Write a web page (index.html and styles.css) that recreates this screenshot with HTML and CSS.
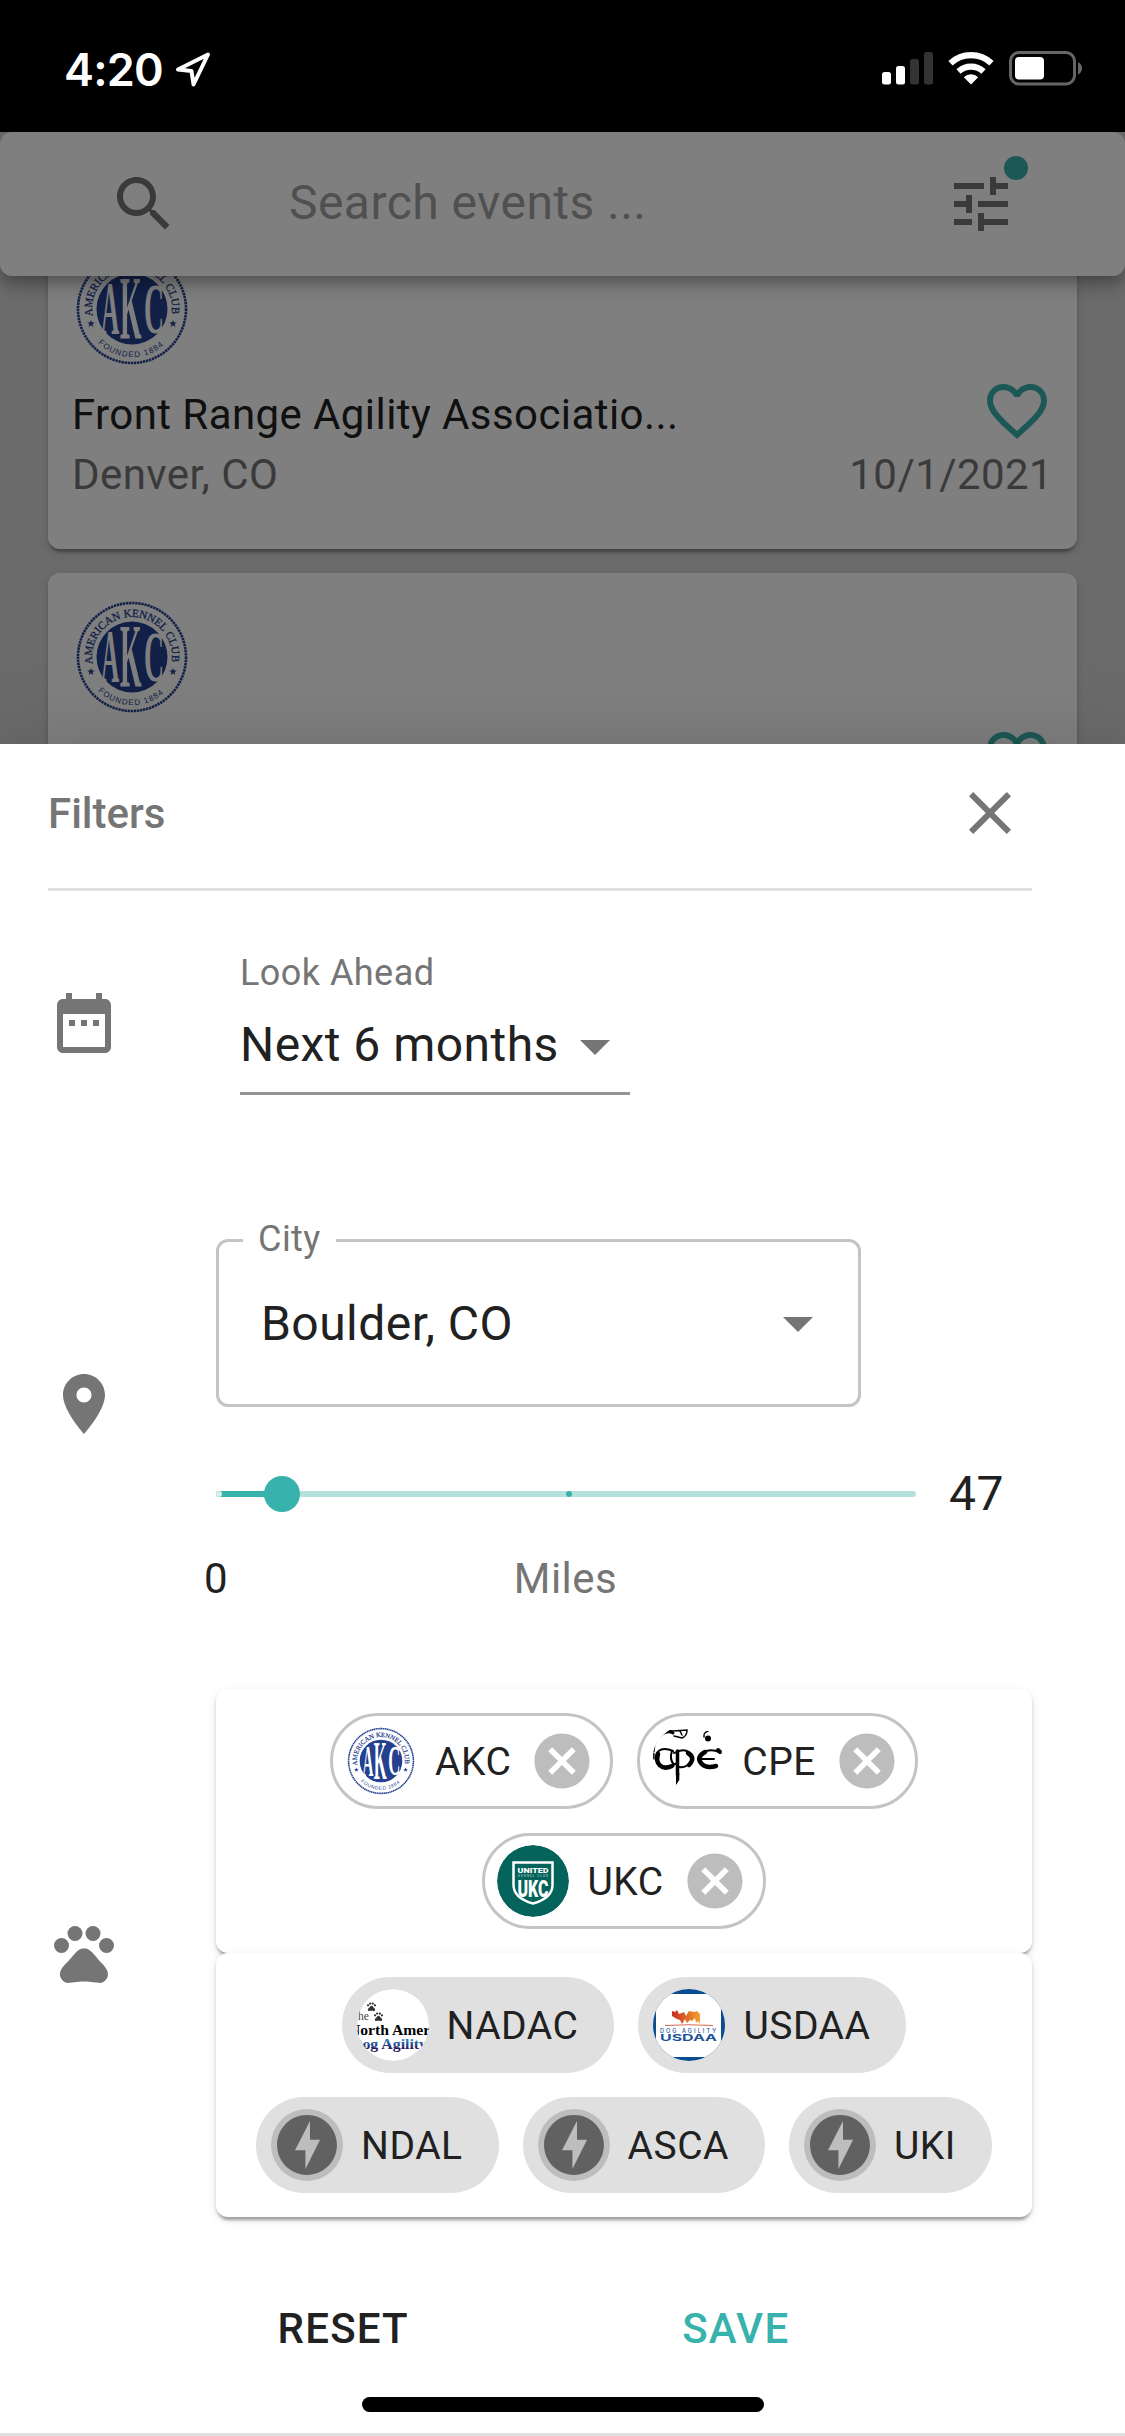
FILE: index.html
```html
<!DOCTYPE html>
<html lang="en">
<head>
    <meta charset="UTF-8">
    <title>Events</title>
    <link rel="stylesheet" href="styles.css">
</head>
<body>

    <!-- shared logo, used in the cards and in the chip -->
    <svg class="defs" width="0" height="0">
        <defs>
            <path id="arcTop" d="M20.600 66.900A40 40 0 1 1 99.400 66.900"/>
            <path id="arcBottom" d="M26 94A48 48 0 0 0 94 94"/>
            <symbol id="akc" viewBox="0 0 120 120">
                <circle cx="60" cy="60" r="54" fill="none" stroke="#24408e" stroke-width="2.600" stroke-dasharray="2.400 0.700"/>
                <circle cx="60" cy="60" r="35.500" fill="#24408e"/>
                <text class="akc-ring" font-size="11"><textPath href="#arcTop">AMERICAN KENNEL CLUB</textPath></text>
                <text class="akc-founded" font-size="8"><textPath href="#arcBottom">FOUNDED 1884</textPath></text>
                <path fill="#24408e" d="M19 71l1 2.500h2.800l-2.200 1.700.8 2.700-2.400-1.600-2.400 1.600.8-2.700-2.200-1.700H18zM101 71l1 2.500h2.800l-2.200 1.700.8 2.700-2.400-1.600-2.400 1.600.8-2.700-2.200-1.700h2.800z"/>
                <g class="akc-letters">
                    <text transform="translate(29 85) scale(.60 1.800)" font-size="42">A</text>
                    <text transform="translate(48 90) scale(.66 2.150)" font-size="42">K</text>
                    <text transform="translate(72 84) scale(.66 1.700)" font-size="42">C</text>
                </g>
            </symbol>
            <symbol id="bolt" viewBox="0 0 24 24">
                <path d="M12 2.020c-5.510 0-9.980 4.470-9.980 9.980s4.470 9.980 9.980 9.980 9.980-4.470 9.980-9.980S17.510 2.020 12 2.020zM11.480 20v-6.260H8L13 4v6.260h3.350L11.480 20z"/>
            </symbol>
            <symbol id="cancel" viewBox="0 0 24 24">
                <path d="M12 2C6.470 2 2 6.470 2 12s4.470 10 10 10 10-4.470 10-10S17.530 2 12 2zm5 13.590L15.590 17 12 13.410 8.410 17 7 15.590 10.590 12 7 8.410 8.410 7 12 10.590 15.590 7 17 8.410 13.410 12 17 15.590z"/>
            </symbol>
            <symbol id="heart" viewBox="0 0 24 24">
                <path d="M16.500 3c-1.740 0-3.410.81-4.500 2.090C10.910 3.810 9.240 3 7.500 3 4.420 3 2 5.420 2 8.500c0 3.780 3.400 6.860 8.550 11.540L12 21.350l1.450-1.320C18.600 15.360 22 12.280 22 8.500 22 5.420 19.580 3 16.500 3zm-4.400 15.550l-.1.100-.1-.1C7.140 14.240 4 11.390 4 8.500 4 6.500 5.500 5 7.500 5c1.540 0 3.040.99 3.570 2.360h1.870C13.460 5.990 14.960 5 16.500 5c2 0 3.500 1.500 3.500 3.500 0 2.890-3.140 5.740-7.900 10.050z"/>
            </symbol>
            <symbol id="arrow" viewBox="0 0 24 24"><path d="M7 10l5 5 5-5z"/></symbol>
            <symbol id="paw" viewBox="0 0 24 24">
                <circle cx="4.500" cy="9.500" r="2.500"/><circle cx="9" cy="5.500" r="2.500"/><circle cx="15" cy="5.500" r="2.500"/><circle cx="19.500" cy="9.500" r="2.500"/>
                <path d="M17.340 14.860c-.87-1.020-1.600-1.890-2.480-2.910-.46-.54-1.050-1.080-1.750-1.320-.11-.04-.22-.07-.33-.09-.25-.04-.52-.04-.78-.04s-.53 0-.79.050c-.11.020-.22.050-.33.090-.7.240-1.280.78-1.750 1.320-.87 1.020-1.600 1.890-2.480 2.910-1.310 1.310-2.920 2.760-2.620 4.790.29 1.020 1.020 2.030 2.330 2.320.73.150 3.060-.44 5.540-.44h.18c2.480 0 4.810.58 5.540.44 1.310-.29 2.040-1.310 2.330-2.320.31-2.040-1.300-3.490-2.610-4.800z"/>
            </symbol>
        </defs>
    </svg>

    <div class="phone">
        <div class="status">
            <span class="time">4:20</span>
            <svg class="location" width="38" height="38" viewBox="0 0 38 38"><path d="M34 4.500L4 19.500l13.500 1.500L19.500 34.500z" fill="none" stroke="#fff" stroke-width="4" stroke-linejoin="round"/></svg>
            <svg class="signals" width="202" height="36" viewBox="0 0 202 36">
                <rect x="0" y="21" width="9" height="12.500" rx="2.500" fill="#fff"/>
                <rect x="14" y="15" width="9" height="18.500" rx="2.500" fill="#fff"/>
                <rect x="28" y="8" width="9" height="25.500" rx="2.500" fill="#333"/>
                <rect x="42" y="1" width="9" height="32.500" rx="2.500" fill="#333"/>
                <path fill="#fff" d="M89 33.500l-7.200-7.300a10.500 10.500 0 0 1 14.400 0z"/>
                <path fill="none" stroke="#fff" stroke-width="6.200" d="M76.500 20.500a18.500 18.500 0 0 1 25 0M68.500 12.300a30 30 0 0 1 41 0"/>
                <rect x="128.500" y="1.500" width="64" height="31.500" rx="8.500" fill="none" stroke="#666" stroke-width="3"/>
                <rect x="133" y="6" width="29" height="22.500" rx="4" fill="#fff"/>
                <path d="M196 11q4 2 4 6.300t-4 6.300z" fill="#666"/>
            </svg>
        </div>

        <div class="events">
            <div class="search-bar">
                <svg class="icon" viewBox="0 0 24 24"><path d="M15.500 14h-.79l-.28-.27C15.410 12.590 16 11.110 16 9.500 16 5.910 13.090 3 9.500 3S3 5.910 3 9.500 5.910 16 9.500 16c1.610 0 3.090-.59 4.230-1.570l.27.28v.79l5 4.990L20.490 19l-4.990-5zm-6 0C7.010 14 5 11.990 5 9.500S7.010 5 9.500 5 14 7.010 14 9.500 11.990 14 9.500 14z"/></svg>
                <span class="search-text">Search events ...</span>
                <div class="tune">
                    <svg class="icon" viewBox="0 0 24 24"><path d="M3 17v2h6v-2H3zM3 5v2h10V5H3zm10 16v-2h8v-2h-8v-2h-2v6h2zM7 9v2H3v2h4v2h2V9H7zm14 4v-2H11v2h10zm-6-4h2V7h4V5h-4V3h-2v6z"/></svg>
                    <span class="badge"></span>
                </div>
            </div>
            <div class="card-list">
                <div class="card">
                    <svg class="card-logo"><use href="#akc"/></svg>
                    <div class="card-row">
                        <span class="card-title">Front Range Agility Associatio...</span>
                        <svg class="icon heart"><use href="#heart"/></svg>
                    </div>
                    <div class="card-row card-meta">
                        <span>Denver, CO</span>
                        <span>10/1/2021</span>
                    </div>
                </div>
                <div class="card">
                    <svg class="card-logo"><use href="#akc"/></svg>
                    <div class="card-row">
                        <span class="card-title"></span>
                        <svg class="icon heart"><use href="#heart"/></svg>
                    </div>
                </div>
            </div>
            <div class="scrim"></div>
        </div>

        <div class="sheet">
            <div class="sheet-header">
                <span>Filters</span>
                <svg class="icon" viewBox="0 0 24 24"><path d="M19 6.410L17.590 5 12 10.590 6.410 5 5 6.410 10.590 12 5 17.590 6.410 19 12 13.410 17.590 19 19 17.590 13.410 12z"/></svg>
            </div>

            <div class="filter look-ahead">
                <svg class="icon" viewBox="0 0 24 24"><path d="M9 11H7v2h2v-2zm4 0h-2v2h2v-2zm4 0h-2v2h2v-2zm2-7h-1V2h-2v2H8V2H6v2H5c-1.110 0-1.990.9-1.990 2L3 20c0 1.100.89 2 2 2h14c1.100 0 2-.9 2-2V6c0-1.100-.9-2-2-2zm0 16H5V9h14v11z"/></svg>
                <div class="select">
                    <div class="label">Look Ahead</div>
                    <div class="select-value">
                        <span>Next 6 months</span>
                        <svg class="icon"><use href="#arrow"/></svg>
                    </div>
                </div>
            </div>

            <div class="filter location-filter">
                <svg class="icon" viewBox="0 0 24 24"><path d="M12 2C8.130 2 5 5.130 5 9c0 5.250 7 13 7 13s7-7.750 7-13c0-3.870-3.130-7-7-7zm0 9.500c-1.380 0-2.500-1.120-2.500-2.500s1.120-2.500 2.500-2.500 2.500 1.120 2.500 2.500-1.120 2.500-2.500 2.500z"/></svg>
                <div class="location-fields">
                    <div class="city">
                        <span class="label">City</span>
                        <span>Boulder, CO</span>
                        <svg class="icon"><use href="#arrow"/></svg>
                    </div>
                    <div class="distance">
                        <div class="slider">
                            <div class="track" style="width: 9.4%"></div>
                            <span class="mark mark-active" style="left: 0%"></span>
                            <span class="mark" style="left: 50%"></span>
                            <span class="thumb" style="left: 9.4%"></span>
                        </div>
                        <span class="distance-value">47</span>
                    </div>
                    <div class="scale">
                        <span class="scale-min">0</span>
                        <span class="scale-unit">Miles</span>
                    </div>
                </div>
            </div>

            <div class="filter">
                <svg class="icon"><use href="#paw"/></svg>
                <div class="orgs">
                    <div class="paper">
                        <div class="chip outlined">
                            <svg class="avatar"><use href="#akc"/></svg>
                            <span>AKC</span>
                            <svg class="delete"><use href="#cancel"/></svg>
                        </div>
                        <div class="chip outlined">
                            <svg class="avatar" viewBox="0 0 72 72">
                                <g fill="none" stroke="#000" stroke-linecap="round">
                                    <path stroke-width="2" d="M21 26C10 21 3 26 4 34"/>
                                    <path stroke-width="4.500" d="M6 29C3 38 9 46 20 41"/>
                                    <path stroke-width="2" d="M20 26q-3 8 2 14M20 40l6-2"/>
                                    <path stroke-width="3.500" d="M25.500 26V50"/>
                                    <path stroke-width="2" d="M22 28q9-5 15-1M27 42q5 1 9-2"/>
                                    <path stroke-width="4.500" d="M36 28q8 5 1 12"/>
                                    <path stroke-width="2" d="M67 27q-6-3-13-1M49 34h13"/>
                                    <path stroke-width="4.500" d="M53 27q-9 5-4 11t15 3"/>
                                    <path stroke-width="4" d="M66 25l2 2"/>
                                    <path stroke-width="1.500" stroke-dasharray="5 2" d="M2 34C1 22 4 14 9 11"/>
                                    <path stroke-width="1.500" d="M8 11q5-6 13-5l14-1q0 6-5 8l-8-2M28 6l2 4M52 12q-1-6 7-6"/>
                                    <path stroke-width="3" d="M10 9q6-4 11-1"/>
                                </g>
                                <path d="M24 48h3.300v7L24 60z"/>
                                <circle cx="56" cy="13.500" r="3"/>
                            </svg>
                            <span>CPE</span>
                            <svg class="delete"><use href="#cancel"/></svg>
                        </div>
                        <div class="chip outlined">
                            <svg class="avatar" viewBox="0 0 72 72">
                                <circle cx="36" cy="36" r="36" fill="#04635b"/>
                                <path d="M16.500 17.500h39V40q0 13-19.500 18.500Q16.500 53 16.500 40z" fill="none" stroke="#fff" stroke-width="2.500"/>
                                <text class="ukc-text" x="20.500" y="27.500" font-size="7.500" textLength="31" lengthAdjust="spacingAndGlyphs">UNITED</text>
                                <text class="ukc-text ukc-faint" x="21" y="32.300" font-size="3.200" textLength="30">KENNEL CLUB</text>
                                <text class="ukc-text" transform="translate(20.500 52) scale(1 1.550)" font-size="16" textLength="31" lengthAdjust="spacingAndGlyphs">UKC</text>
                            </svg>
                            <span>UKC</span>
                            <svg class="delete"><use href="#cancel"/></svg>
                        </div>
                    </div>
                    <div class="paper">
                        <div class="chip">
                            <svg class="avatar" viewBox="0 0 72 72">
                                <defs><linearGradient id="agility" x1="0" y1="0" x2="0" y2="1"><stop offset=".3" stop-color="#2b80bd"/><stop offset=".8" stop-color="#251a5e"/></linearGradient></defs>
                                <circle cx="36" cy="36" r="36" fill="#fff"/>
                                <use href="#paw" x="9" y="12" width="11" height="11" fill="#333"/>
                                <use href="#paw" x="16" y="22" width="11" height="11" fill="#333"/>
                                <text class="nadac" x="-6" y="31" font-size="11.500" fill="#444">The</text>
                                <text class="nadac bold" x="-8" y="45.500" font-size="14" textLength="109" lengthAdjust="spacingAndGlyphs">North American</text>
                                <text class="nadac bold" x="-6" y="59.500" font-size="14.500" fill="url(#agility)" textLength="76" lengthAdjust="spacingAndGlyphs">Dog Agility</text>
                            </svg>
                            <span>NADAC</span>
                        </div>
                        <div class="chip">
                            <svg class="avatar" viewBox="0 0 72 72">
                                <rect width="72" height="72" fill="#0b4d91"/>
                                <rect x="3" y="5" width="65" height="63" fill="#fff"/>
                                <defs><linearGradient id="dogs"><stop offset="0" stop-color="#c62d22"/><stop offset="1" stop-color="#f5a12f"/></linearGradient></defs>
                                <path fill="url(#dogs)" d="M19 22l3 1 2-2 2 4 5-2 2 4 3-5 5 1 3-1 3 3V35l-2-3-2 2-1-5-3 3-2-1-3 3-2-4-3 5-2-4-3-1-5-3z"/>
                                <path d="M12 36.500q24-1.500 48 0" stroke="#d8694e" fill="none"/>
                                <text class="usdaa-small" x="7" y="43.500" font-size="5.500" textLength="56" lengthAdjust="spacing">DOG AGILITY</text>
                                <text class="usdaa" x="7" y="52.300" font-size="9.500" textLength="57" lengthAdjust="spacingAndGlyphs">USDAA</text>
                            </svg>
                            <span>USDAA</span>
                        </div>
                        <div class="chip">
                            <svg class="avatar avatar-default"><use href="#bolt"/></svg>
                            <span>NDAL</span>
                        </div>
                        <div class="chip">
                            <svg class="avatar avatar-default"><use href="#bolt"/></svg>
                            <span>ASCA</span>
                        </div>
                        <div class="chip">
                            <svg class="avatar avatar-default"><use href="#bolt"/></svg>
                            <span>UKI</span>
                        </div>
                    </div>
                </div>
            </div>

            <div class="actions">
                <button class="btn">RESET</button>
                <button class="btn btn-primary">SAVE</button>
            </div>
            <div class="home-bar"></div>
        </div>
    </div>

</body>
</html>
```
FILE: styles.css
```css
* {
    box-sizing: border-box;
}

body {
    margin: 0;
    font-family: Roboto, 'Liberation Sans', sans-serif;
    font-size: 48px;
    letter-spacing: 0.00938em;
    color: #212121;
}

.defs {
    position: absolute;
}

.phone {
    display: flex;
    flex-direction: column;
    width: 1125px;
    height: 2436px;
    overflow: hidden;
    background-color: #fff;
}

.icon {
    width: 72px;
    height: 72px;
    flex-shrink: 0;
    fill: #757575;
}

/* status bar */
.status {
    display: flex;
    align-items: center;
    height: 132px;
    padding: 6px 41px 0 64px;
    background-color: #000;
    color: #fff;
}

.time {
    font-family: Inter, sans-serif;
    font-size: 45px;
    font-weight: 600;
    letter-spacing: -0.8px;
}

.location {
    margin-left: 11px;
}

.signals {
    margin-left: auto;
}

/* events list behind the sheet */
.events {
    position: relative;
    height: 612px;
    flex-shrink: 0;
    overflow: hidden;
    background-color: #d6d6d6;
}

.search-bar {
    position: relative;
    z-index: 1;
    display: flex;
    align-items: center;
    height: 144px;
    padding: 0 108px;
    background-color: #fff;
    border-radius: 12px;
    box-shadow: 0 6px 12px -3px rgba(0, 0, 0, 0.2), 0 12px 15px rgba(0, 0, 0, 0.14), 0 3px 30px rgba(0, 0, 0, 0.12);
}

.search-text {
    flex: 1;
    margin-left: 109px;
    padding-bottom: 3px;
    color: #a0a0a0;
}

.tune {
    position: relative;
    height: 72px;
}

.badge {
    position: absolute;
    top: -12px;
    right: -11px;
    width: 24px;
    height: 24px;
    border-radius: 50%;
    background-color: #38b2ac;
}

.card-list {
    display: flex;
    flex-direction: column;
    gap: 24px;
    margin: -51px 48px 0;
}

.card {
    height: 324px;
    padding: 24px;
    background-color: #fff;
    border-radius: 12px;
    box-shadow: 0 6px 3px -3px rgba(0, 0, 0, 0.2), 0 3px 3px rgba(0, 0, 0, 0.14), 0 3px 9px rgba(0, 0, 0, 0.12);
    font-size: 42px;
    line-height: 60px;
    letter-spacing: 0.01em;
}

.card-logo {
    display: block;
    width: 120px;
    height: 120px;
}

.card-row {
    display: flex;
    justify-content: space-between;
    height: 60px;
    margin-top: 16px;
}

.card-meta {
    margin-top: 0;
    color: #757575;
}

.heart {
    margin-top: -10px;
    fill: #38b2ac;
}

.scrim {
    position: absolute;
    inset: 0;
    z-index: 2;
    background-color: rgba(0, 0, 0, 0.5);
}

/* logos */
.akc-ring {
    font-family: 'Liberation Serif', serif;
    letter-spacing: 0;
    fill: #24408e;
    stroke: #24408e;
    stroke-width: 0.3px;
}

.akc-founded {
    font-family: 'Liberation Sans', sans-serif;
    letter-spacing: 1.1px;
    fill: #24408e;
}

.akc-letters {
    font-family: 'Liberation Serif', serif;
    font-weight: bold;
    letter-spacing: 0;
    fill: #fff;
}

.ukc-text {
    font-family: Roboto, sans-serif;
    font-weight: 900;
    letter-spacing: 0;
    fill: #fff;
}

.ukc-faint {
    opacity: 0.4;
}

.nadac {
    font-family: 'Liberation Serif', serif;
    letter-spacing: 0;
}

.bold {
    font-weight: bold;
}

.usdaa,
.usdaa-small {
    font-family: Inter, sans-serif;
    font-weight: 700;
    letter-spacing: 0;
    fill: #1c5299;
}

.usdaa-small {
    font-weight: 500;
}

/* filter sheet */
.sheet {
    position: relative;
    display: flex;
    flex-direction: column;
    flex: 1;
    padding: 0 93px 0 48px;
    background-color: #fff;
    border-bottom: 3px solid #e0e0e0;
    box-shadow: 0 24px 30px -15px rgba(0, 0, 0, 0.2), 0 48px 72px 6px rgba(0, 0, 0, 0.14), 0 18px 90px 15px rgba(0, 0, 0, 0.12);
}

.sheet-header {
    display: flex;
    align-items: center;
    justify-content: space-between;
    height: 147px;
    padding: 0 6px 6px 0;
    border-bottom: 3px solid #e0e0e0;
    color: #757575;
    font-size: 42px;
    font-weight: 500;
    letter-spacing: 0;
}

.filter {
    display: flex;
    align-items: center;
}

.label {
    font-size: 36px;
    line-height: 36px;
    color: #757575;
}

.look-ahead {
    margin-top: 60px;
}

.select {
    width: 390px;
    margin-left: 120px;
    padding-top: 4px;
    border-bottom: 3px solid #949494;
}

.select-value {
    display: flex;
    align-items: center;
    justify-content: space-between;
    height: 90px;
    margin-top: 11px;
    padding-bottom: 3px;
    white-space: nowrap;
}

.select-value span {
    padding-bottom: 3px;
}

.location-filter {
    margin-top: 144px;
    align-items: flex-start;
}

.location-filter > .icon {
    margin-top: 129px;
}

.location-fields {
    width: 816px;
    margin-left: 96px;
    padding-bottom: 35px;
}

.city {
    position: relative;
    display: flex;
    align-items: center;
    justify-content: space-between;
    width: 645px;
    height: 168px;
    padding: 0 24px 0 42px;
    border: 3px solid #c4c4c4;
    border-radius: 12px;
}

/* floats over the outline */
.city .label {
    position: absolute;
    top: -21px;
    left: 24px;
    padding: 0 15px;
    background-color: #fff;
}

.distance {
    display: flex;
    align-items: center;
    gap: 33px;
    height: 60px;
    margin-top: 57px;
}

.distance-value {
    padding-bottom: 2px;
}

.slider {
    position: relative;
    width: 700px;
    height: 6px;
    border-radius: 3px;
    background-color: #b4e0dd;
}

.track {
    height: 6px;
    border-radius: 3px;
    background-color: #38b2ac;
}

.mark {
    position: absolute;
    top: 0;
    width: 6px;
    height: 6px;
    border-radius: 3px;
    background-color: #38b2ac;
}

.mark-active {
    background-color: #d7f0ee;
}

.thumb {
    position: absolute;
    top: -15px;
    width: 36px;
    height: 36px;
    margin-left: -18px;
    border-radius: 50%;
    background-color: #38b2ac;
}

.scale {
    display: flex;
    width: 700px;
    height: 60px;
    margin-top: 25px;
    font-size: 42px;
    line-height: 60px;
    letter-spacing: 0.01071em;
}

.scale-min {
    width: 0;
    margin-left: -12px;
}

.scale-unit {
    flex: 1;
    padding-left: 11px;
    text-align: center;
    color: #757575;
}

.orgs {
    width: 816px;
    margin-left: 96px;
}

.location-filter + .filter {
    margin-top: 45px;
}

.paper {
    position: relative;
    display: flex;
    flex-wrap: wrap;
    justify-content: center;
    gap: 24px;
    padding: 24px;
    background-color: #fff;
    border-radius: 12px;
    box-shadow: 0 6px 3px -3px rgba(0, 0, 0, 0.2), 0 3px 3px rgba(0, 0, 0, 0.14), 0 3px 9px rgba(0, 0, 0, 0.12);
}

.chip {
    display: flex;
    align-items: center;
    height: 96px;
    padding: 0 36px 0 15px;
    border-radius: 48px;
    background-color: #e0e0e0;
    font-size: 39px;
    letter-spacing: 0.5px;
}

.chip span {
    padding-top: 2px;
}

.chip.outlined {
    padding: 0 15px 0 12px;
    border: 3px solid #c4c4c4;
    background-color: #fff;
}

.avatar {
    width: 72px;
    height: 72px;
    margin-right: 18px;
    border-radius: 50%;
}

.avatar-default {
    background-color: #bdbdbd;
    fill: #616161;
}

.delete {
    width: 66px;
    height: 66px;
    margin-left: 18px;
    fill: #bdbdbd;
}

.actions {
    display: flex;
    justify-content: space-around;
    margin-top: 82px;
    padding: 0 100px 0 99px;
}

.btn {
    width: 192px;
    height: 60px;
    padding: 0;
    border: none;
    background: none;
    color: #212121;
    font-family: inherit;
    font-size: 42px;
    font-weight: 500;
    line-height: 60px;
    letter-spacing: 0.02857em;
}

.btn-primary {
    color: #38b2ac;
}

.home-bar {
    width: 402px;
    height: 15px;
    margin: 38px 0 0 314px;
    border-radius: 8px;
    background-color: #000;
}
```
